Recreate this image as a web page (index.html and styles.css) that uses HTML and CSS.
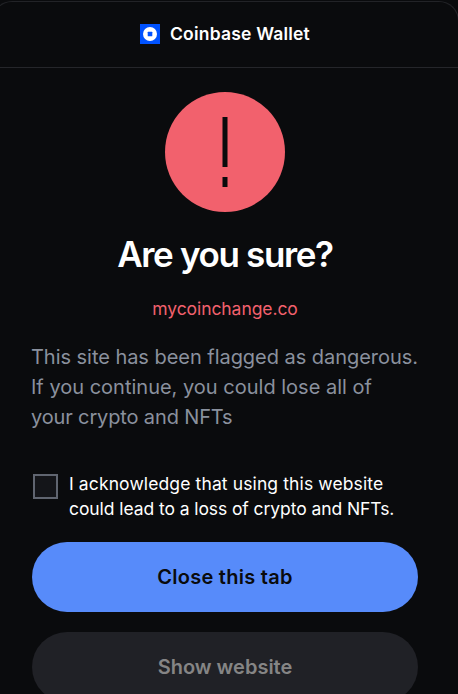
FILE: index.html
```html
<!DOCTYPE html>
<html lang="en">
<head>
<meta charset="UTF-8">
<meta name="viewport" content="width=device-width, initial-scale=1.0">
<title>Coinbase Wallet</title>
<link rel="stylesheet" href="styles.css">
</head>
<body>
<div class="panel">
    <header class="header">
        <svg class="logo" width="20" height="20" viewBox="0 0 20 20">
            <rect width="20" height="20" fill="#0052ff"/>
            <circle cx="10" cy="10" r="7" fill="#fff"/>
            <rect x="7.7" y="7.7" width="4.6" height="4.6" rx=".5" fill="#0052ff"/>
        </svg>
        <span class="brand">Coinbase Wallet</span>
    </header>
    <main class="content">
        <svg class="alert" width="120" height="120" viewBox="0 0 120 120">
            <circle cx="60" cy="60" r="60" fill="#f2616d"/>
            <path d="M57.5 25h5v50h-5zM57.5 85h5v10h-5z" fill="#0a0b0d"/>
        </svg>
        <h1 class="title">Are you sure?</h1>
        <p class="domain">mycoinchange.co</p>
        <p class="warning">
            <span class="warning-1">This site has been flagged as dangerous.</span><br>
            <span class="warning-2">If you continue, you could lose all of</span><br>
            <span class="warning-3">your crypto and NFTs</span>
        </p>
        <label class="ack">
            <input class="ack-box" type="checkbox">
            <span class="ack-text"><span class="ack-1">I acknowledge that using this website</span><br><span class="ack-2">could lead to a loss of crypto and NFTs.</span></span>
        </label>
        <button class="btn btn-primary">Close this tab</button>
        <button class="btn btn-secondary" disabled>Show website</button>
    </main>
</div>
</body>
</html>
```

FILE: styles.css
```css
*{box-sizing:border-box;}
html{height:100%;overflow:hidden;}
body{height:100%;margin:0;overflow:hidden;background:#0a0b0d;color:#fff;font-family:Inter,"Liberation Sans",sans-serif;}
h1,p{margin:0;}
.panel{width:467px;height:693px;margin:1px 0 0 -8px;border:1px solid #222327;border-bottom:0;border-radius:20px 20px 0 0;overflow:hidden;}
.header{display:flex;align-items:center;justify-content:center;gap:10px;height:66px;padding:0 1px 2px 0;border-bottom:1px solid #25262a;}
.logo{flex:none;}
.brand{font-size:17.5px;font-weight:600;line-height:24px;letter-spacing:.2px;}
.content{display:flex;flex-direction:column;align-items:center;padding:24px 40px 0 39px;white-space:nowrap;}
.alert{flex:none;}
.title{margin-top:20px;font-size:35px;font-weight:600;line-height:45px;letter-spacing:-1.35px;}
.domain{margin-top:20px;color:#f2616d;font-size:17.5px;line-height:24px;letter-spacing:-.07px;}
.warning{align-self:stretch;margin:21px 0 0 -1px;color:#8a919e;font-size:20px;line-height:30px;}
.warning-1{letter-spacing:-.04px;}
.warning-3{letter-spacing:-.14px;}
.ack{display:flex;align-self:stretch;margin-top:39px;padding-left:1px;}
.ack-box{flex:none;appearance:none;width:25px;height:25px;margin:3px 11px 0 0;border:2px solid #606570;background:#141519;}
.ack-text{font-size:17.5px;line-height:25px;}
.ack-1{letter-spacing:.12px;}
.ack-2{letter-spacing:-.08px;}
.btn{flex:none;width:386px;height:70px;padding:0;border:0;border-radius:35px;font:600 20px/28px Inter,"Liberation Sans",sans-serif;}
.btn-primary{margin-top:21px;background:#578bfa;color:#0a0b0d;letter-spacing:.27px;}
.btn-secondary{margin-top:20px;background:#202126;color:#858585;}
```
